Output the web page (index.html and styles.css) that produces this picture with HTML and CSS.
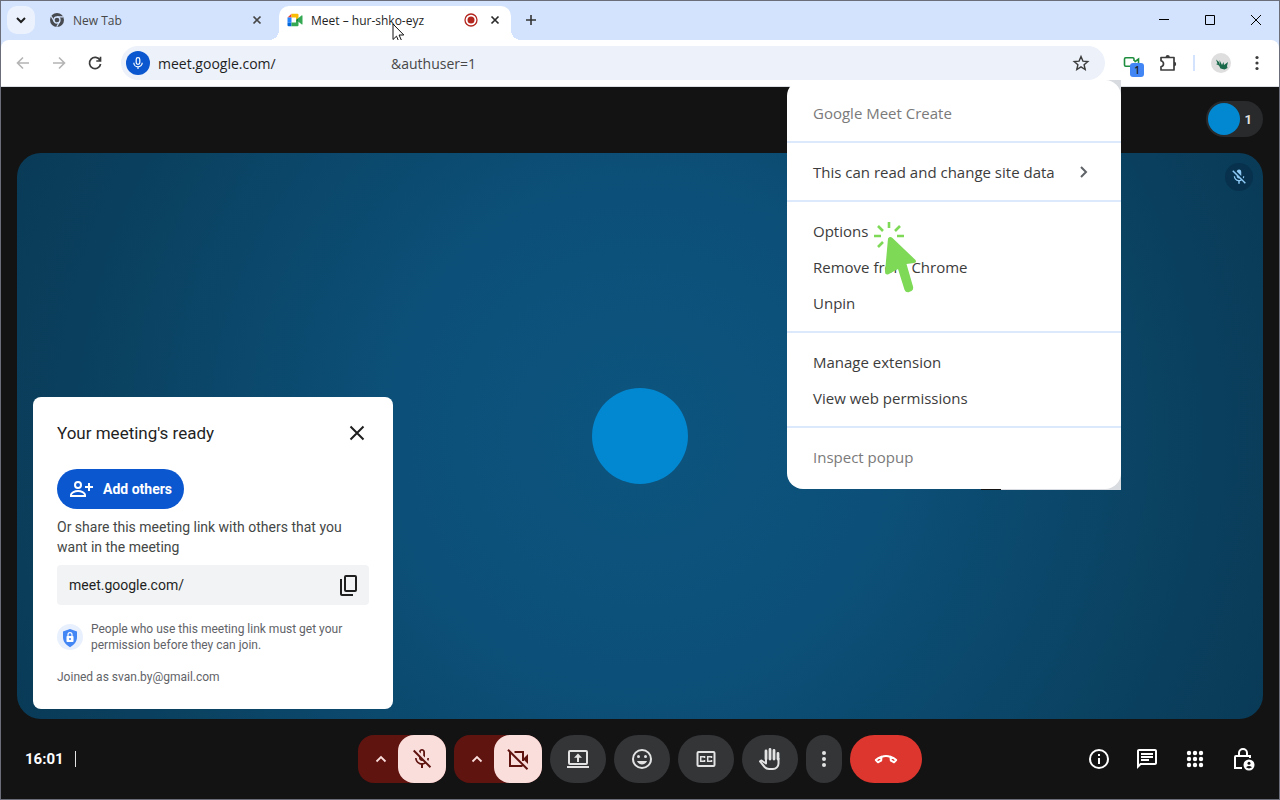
FILE: index.html
```html
<!DOCTYPE html>
<html lang="en">
<head>
  <meta charset="UTF-8">
  <title>Meet – hur-shko-eyz</title>
  <link rel="stylesheet" href="styles.css">
</head>
<body>
<div class="window">
  <header class="browser">
    <div class="tabs">
      <button class="tab-search" aria-label="Search tabs">
        <svg width="12" height="12" viewBox="0 0 12 12"><path d="M2 4 6 8 10 4" fill="none" stroke="#1f1f1f" stroke-width="2"/></svg>
      </button>
      <div class="tab">
        <svg width="16" height="16" viewBox="0 0 16 16">
          <circle cx="8" cy="8" r="7" fill="#474b50"/>
          <circle cx="8" cy="8" r="3" fill="#474b50" stroke="#d3e3fd" stroke-width="1.300"/>
          <path d="M8 4.900h6.300M5.300 9.500 2.200 4.200M10.700 9.500 7.700 14.800" stroke="#d3e3fd" stroke-width="1.200"/>
        </svg>
        <span class="tab-title">New Tab</span>
        <button class="tab-close" aria-label="Close tab">
          <svg width="10" height="10" viewBox="0 0 10 10"><path d="M1.500 1.500 8.500 8.500M8.500 1.500 1.500 8.500" stroke="#474747" stroke-width="1.700"/></svg>
        </button>
      </div>
      <div class="tab active">
        <svg width="16" height="16" viewBox="0 0 16 16">
          <path d="M0.500 5.500 4.500 1.800V5.500z" fill="#ea4335"/>
          <path d="M4.500 1.800H10.500q1 0 1 1V6L9 8V5.500H4.500z" fill="#fbbc04"/>
          <path d="M.500 5.500h4v5h-4z" fill="#2684fc"/>
          <path d="M.500 10.500h4v3.700h-3q-1 0-1-1z" fill="#0066da"/>
          <path d="M4.500 10.500H9V8l2.500-2v7.200q0 1-1 1h-6z" fill="#34a853"/>
          <path d="M11.500 6l3-2.600q1-.6 1 .5v8q0 1-1 .4l-3-2.500z" fill="#34a853"/>
          <path d="M9 8l2.500-2v4z" fill="#188038"/>
        </svg>
        <span class="tab-title">Meet – hur-shko-eyz</span>
        <svg class="record" width="14" height="14" viewBox="0 0 14 14"><circle cx="7" cy="7" r="6" fill="none" stroke="#b3261e" stroke-width="1.300"/><circle cx="7" cy="7" r="3.500" fill="#b3261e"/></svg>
        <button class="tab-close" aria-label="Close tab">
          <svg width="10" height="10" viewBox="0 0 10 10"><path d="M1.500 1.500 8.500 8.500M8.500 1.500 1.500 8.500" stroke="#2b2b2b" stroke-width="1.700"/></svg>
        </button>
        <svg class="pointer" width="13" height="20" viewBox="0 0 13 20"><path d="M1 1v15.500l3.500-3.300 2.300 5.300 2.600-1.200L7.100 12h4.700z" fill="#fff" stroke="#111" stroke-width="1"/></svg>
      </div>
      <button class="new-tab" aria-label="New tab">
        <svg width="12" height="12" viewBox="0 0 12 12"><path d="M6 1v10M1 6h10" stroke="#333" stroke-width="1.600"/></svg>
      </button>
      <div class="controls">
        <button aria-label="Minimize"><svg width="12" height="12" viewBox="0 0 12 12"><path d="M1 5.500h10" stroke="#000"/></svg></button>
        <button aria-label="Maximize"><svg width="12" height="12" viewBox="0 0 12 12"><path d="M1.500 1.500h9v9h-9z" fill="none" stroke="#000"/></svg></button>
        <button aria-label="Close"><svg width="12" height="12" viewBox="0 0 12 12"><path d="M1 1l10 10M11 1 1 11" stroke="#000"/></svg></button>
      </div>
    </div>

    <div class="toolbar">
      <div class="nav">
        <button aria-label="Back"><svg width="16" height="16" viewBox="0 0 16 16"><path d="M14 8H3M8 2.500 2.500 8 8 13.500" fill="none" stroke="#b4b4b4" stroke-width="1.600"/></svg></button>
        <button aria-label="Forward"><svg width="16" height="16" viewBox="0 0 16 16"><path d="M2 8h11M8 2.500 13.500 8 8 13.500" fill="none" stroke="#b4b4b4" stroke-width="1.600"/></svg></button>
        <button aria-label="Reload"><svg width="16" height="16" viewBox="0 0 16 16"><path d="M13 5.300A5.600 5.600 0 1 0 13.600 9M13.500 1.800V6H9.300" fill="none" stroke="#3c3c3c" stroke-width="1.700"/></svg></button>
      </div>
      <div class="omnibox">
        <button class="mic-chip" aria-label="Microphone in use">
          <svg width="16" height="16" viewBox="0 0 16 16"><rect x="6.200" y="2.600" width="3.600" height="6.800" rx="1.800" fill="none" stroke="#fff" stroke-width="1.200"/><path d="M3.800 7.700a4.200 4.200 0 0 0 8.400 0M8 12v2" fill="none" stroke="#fff" stroke-width="1.200"/></svg>
        </button>
        <input class="url" type="text" aria-label="Address" value="meet.google.com/">
        <span class="query">&amp;authuser=1</span>
        <button class="star" aria-label="Bookmark this tab">
          <svg width="18" height="18" viewBox="0 0 18 18"><path d="M9 2.500l1.900 4.600 4.900.4-3.700 3.200 1.100 4.800L9 12.900l-4.200 2.600 1.100-4.800L2.200 7.500l4.900-.4z" fill="none" stroke="#3c3c3c" stroke-width="1.400"/></svg>
        </button>
      </div>
      <button class="ext" aria-label="Google Meet Create">
        <svg width="18" height="16" viewBox="0 0 18 16"><path d="M12 6V4q0-1.200-1.200-1.200H3.700Q2.500 2.800 2.500 4v6q0 1.200 1.200 1.200H9M12.500 7l4-3v4" fill="none" stroke="#1e8e3e" stroke-width="1.600"/></svg>
        <span class="badge">1</span>
      </button>
      <button class="puzzle" aria-label="Extensions">
        <svg width="18" height="18" viewBox="0 0 18 18"><path d="M2 3.500h13v12.500H2v-3.200q2.500-.6 2.500-3T2 6.700z" fill="none" stroke="#3c3c3c" stroke-width="1.700" stroke-linejoin="round"/><path d="M6.600 3a2.100 2.100 0 0 1 4.200 0zM15 7.800a2.200 2.200 0 0 1 0 4.400z" fill="#3c3c3c"/></svg>
      </button>
      <span class="divider"></span>
      <button class="profile" aria-label="Profile">
        <svg width="20" height="20" viewBox="0 0 20 20"><circle cx="10" cy="10" r="10" fill="#dedede"/><path d="M5 6.500l3 2.500 1 3-.5-5 2.500 5 1.500-3 .5 3 4-3-1 4 .5 2-3 1.500-4-1-1.500-3-3-1.500 1.500-.5z" fill="#19694a"/></svg>
      </button>
      <button class="more" aria-label="Customize and control">
        <svg width="16" height="16" viewBox="0 0 16 16" fill="#3c3c3c"><circle cx="8" cy="2.500" r="1.600"/><circle cx="8" cy="8" r="1.600"/><circle cx="8" cy="13.500" r="1.600"/></svg>
      </button>

      <div class="menu-shot">
        <ul class="menu">
          <li><button class="muted">Google Meet Create</button></li>
          <li><button>This can read and change site data
            <svg width="10" height="14" viewBox="0 0 10 14"><path d="M2 2l5 5-5 5" fill="none" stroke="#5f6368" stroke-width="2"/></svg></button></li>
          <li>
            <button>Options</button>
            <button>Remove from Chrome</button>
            <button>Unpin</button>
            <svg class="click" width="46" height="76" viewBox="0 0 46 76">
              <path d="M17 3v6M6 7l5 5M28 7l-5 5M2 17h7M25 17h7M6 28l5-5" stroke="#7ed957" stroke-width="2.600" fill="none"/>
              <path d="M16 19.500q2-2.500 4.500-.5l23 22q1.500 2.500-1.500 2.900l-7.500 1.100 6.500 22.500q.8 3-1.500 4.500l-3 1.200q-3 .3-4-2.500L26 50l-10 5.500q-3 .5-3-2.500z" fill="#7ed957"/>
            </svg>
          </li>
          <li>
            <button>Manage extension</button>
            <button>View web permissions</button>
          </li>
          <li><button class="muted">Inspect popup</button></li>
        </ul>
      </div>
    </div>
  </header>

  <main class="meet">
    <div class="top">
      <button class="people" aria-label="People"><span class="face"></span>1</button>
    </div>

    <section class="stage">
      <div class="avatar"></div>
      <div class="muted-badge">
        <svg width="18" height="18" viewBox="0 0 24 24" fill="#8ec9f5"><path d="M15 10.600V5a3 3 0 0 0-5.960-.35zM19 11h-1.700c0 .58-.1 1.130-.27 1.640l1.270 1.270c.44-.88.7-1.870.7-2.910zM4.410 2.860 3 4.270l6 6V11c0 1.660 1.340 3 3 3 .23 0 .44-.03.65-.08l1.660 1.660c-.71.33-1.500.52-2.310.52-2.760 0-5.300-2.100-5.300-5.100H5c0 3.410 2.720 6.230 6 6.720V21h2v-3.280c.91-.13 1.770-.45 2.550-.9l4.200 4.200 1.410-1.410z"/></svg>
      </div>

      <div class="card">
        <div class="card-head">
          <h2>Your meeting's ready</h2>
          <button aria-label="Close"><svg width="16" height="16" viewBox="0 0 16 16"><path d="M1.500 1.500l13 13M14.500 1.500l-13 13" stroke="#1f1f1f" stroke-width="2"/></svg></button>
        </div>
        <button class="add">
          <svg width="24" height="24" viewBox="0 0 24 24" fill="none" stroke="#fff" stroke-width="2"><circle cx="9" cy="8" r="3"/><path d="M2 19v-1.200C2 15.500 6 14 9 14s7 1.500 7 3.800V19zM20 6v8M16 10h8"/></svg>
          Add others
        </button>
        <p class="share">Or share this meeting link with others that you want in the meeting</p>
        <div class="link">
          <input type="text" aria-label="Meeting link" value="meet.google.com/" readonly>
          <button aria-label="Copy link">
            <svg width="24" height="24" viewBox="0 0 24 24" fill="none" stroke="#1f1f1f" stroke-width="2"><rect x="8" y="3" width="11" height="15" rx="1"/><path d="M4 6v15q0 1 1 1h11"/></svg>
          </button>
        </div>
        <div class="note">
          <svg width="26" height="26" viewBox="0 0 26 26"><circle cx="13" cy="13" r="13" fill="#e8f0fe"/><path d="M13 5l7 2.600v5.400c0 4.600-3 8-7 10.200-4-2.200-7-5.600-7-10.200V7.600z" fill="#4285f4"/><rect x="9.500" y="12" width="7" height="6" rx=".8" fill="#fff"/><path d="M11 12v-1.300a2 2 0 0 1 4 0V12" fill="none" stroke="#fff" stroke-width="1.200"/><circle cx="13" cy="15" r="1" fill="#4285f4"/></svg>
          <p>People who use this meeting link must get your permission before they can join.</p>
        </div>
        <p class="joined">Joined as svan.by@gmail.com</p>
      </div>
    </section>

    <footer class="bar">
      <div class="clock">16:01</div>
      <div class="actions">
        <div class="split">
          <button class="arrow" aria-label="Audio settings"><svg width="12" height="12" viewBox="0 0 12 12"><path d="M1.500 8.500 6 4l4.500 4.500" fill="none" stroke="#f9dedc" stroke-width="1.800"/></svg></button>
          <button class="off" aria-label="Turn on microphone">
            <svg width="24" height="24" viewBox="0 0 24 24" fill="#601410"><path d="M10.800 4.900c0-.66.54-1.200 1.200-1.200s1.200.54 1.200 1.200l-.01 3.910L15 10.600V5c0-1.660-1.340-3-3-3-1.540 0-2.790 1.160-2.960 2.650l1.760 1.760zM19 11h-1.700c0 .58-.1 1.130-.27 1.640l1.270 1.270c.44-.88.7-1.870.7-2.910zM4.410 2.860 3 4.270l6 6V11c0 1.660 1.340 3 3 3 .23 0 .44-.03.65-.08l1.660 1.660c-.71.33-1.500.52-2.310.52-2.760 0-5.300-2.100-5.300-5.100H5c0 3.410 2.720 6.230 6 6.720V21h2v-3.280c.91-.13 1.770-.45 2.550-.9l4.200 4.200 1.410-1.410z"/></svg>
          </button>
        </div>
        <div class="split">
          <button class="arrow" aria-label="Video settings"><svg width="12" height="12" viewBox="0 0 12 12"><path d="M1.500 8.500 6 4l4.500 4.500" fill="none" stroke="#f9dedc" stroke-width="1.800"/></svg></button>
          <button class="off" aria-label="Turn on camera">
            <svg width="24" height="24" viewBox="0 0 24 24" fill="none" stroke="#601410" stroke-width="2"><path d="M4 4.500V19h12.500M8.500 5H17v9M2 2.800 21.500 22.300"/><path d="M18 11l4-4v10l-4-4z" fill="#601410" stroke="none"/></svg>
          </button>
        </div>
        <button class="round" aria-label="Present now">
          <svg width="24" height="24" viewBox="0 0 24 24" fill="none" stroke="#e3e3e3" stroke-width="2"><rect x="3" y="4" width="18" height="13" rx="1"/><path d="M1 20h22M12 15V9"/><path d="M8 10.700 12 6.500l4 4.200z" fill="#e3e3e3" stroke="none"/></svg>
        </button>
        <button class="round" aria-label="Send a reaction">
          <svg width="24" height="24" viewBox="0 0 24 24" fill="#e3e3e3"><circle cx="12" cy="12" r="9" fill="none" stroke="#e3e3e3" stroke-width="2"/><circle cx="8.500" cy="9.500" r="1.500"/><circle cx="15.500" cy="9.500" r="1.500"/><path d="M7 14c.8 2.040 2.700 3.500 5 3.500s4.200-1.460 5-3.500z"/></svg>
        </button>
        <button class="round" aria-label="Turn on captions">
          <svg width="24" height="24" viewBox="0 0 24 24" fill="none" stroke="#e3e3e3"><rect x="3.500" y="5" width="17" height="14" rx="1" stroke-width="2"/><path d="M10.500 11v-1.200H6.700v4.400h3.800V13M17.500 11v-1.200h-3.800v4.400h3.800V13" stroke-width="1.500"/></svg>
        </button>
        <button class="round" aria-label="Raise hand">
          <svg width="24" height="24" viewBox="0 0 24 24" fill="none" stroke="#e3e3e3" stroke-width="2"><path d="M8 12V4M12 12V2.500M16 12V3.500M20 12V6.500" stroke-width="2.800" stroke-linecap="round"/><path d="M8 11v5.500l-4.500-3-1.500.8 4.600 5.700a6 6 0 0 0 4.600 2H15a5.500 5.500 0 0 0 5.500-5.500V11" stroke-linejoin="round"/></svg>
        </button>
        <button class="round narrow" aria-label="More options">
          <svg width="24" height="24" viewBox="0 0 24 24" fill="#e3e3e3"><circle cx="12" cy="6" r="2"/><circle cx="12" cy="12" r="2"/><circle cx="12" cy="18" r="2"/></svg>
        </button>
        <button class="round leave" aria-label="Leave call">
          <svg width="24" height="24" viewBox="0 0 24 24" fill="none" stroke="#fff" stroke-width="2" stroke-linejoin="round"><path d="M7.500 10Q12 8 16.500 10M7.500 9.800C5 10.500 3 11.800 1.800 13L4 15.300Q5.500 14.300 7.200 13.500zM16.500 9.800c2.500.7 4.500 2 5.700 3.200L20 15.300q-1.500-1-3.200-1.800z"/></svg>
        </button>
      </div>
      <div class="tools">
        <button aria-label="Meeting details">
          <svg width="24" height="24" viewBox="0 0 24 24"><circle cx="12" cy="12" r="9" fill="none" stroke="#fff" stroke-width="2"/><path d="M11 7h2v2h-2zM11 11h2v6h-2z" fill="#fff"/></svg>
        </button>
        <button aria-label="Chat">
          <svg width="24" height="24" viewBox="0 0 24 24" fill="#fff"><path d="M4 4h16v12H5.170L4 17.170V4m0-2c-1.100 0-1.990.9-1.990 2L2 22l4-4h14c1.100 0 2-.9 2-2V4c0-1.100-.9-2-2-2zm2 10h8v2H6zm0-3h12v2H6zm0-3h12v2H6z"/></svg>
        </button>
        <button aria-label="Activities">
          <svg width="24" height="24" viewBox="0 0 24 24" fill="#fff"><circle cx="6" cy="6" r="2.200"/><circle cx="12" cy="6" r="2.200"/><circle cx="18" cy="6" r="2.200"/><circle cx="6" cy="12" r="2.200"/><circle cx="12" cy="12" r="2.200"/><circle cx="18" cy="12" r="2.200"/><circle cx="6" cy="18" r="2.200"/><circle cx="12" cy="18" r="2.200"/><circle cx="18" cy="18" r="2.200"/></svg>
        </button>
        <button aria-label="Host controls">
          <svg width="24" height="24" viewBox="0 0 24 24" fill="none" stroke="#fff" stroke-width="2"><path d="M19 11V9H5q-1 0-1 1v11h7M8 9V6a4 4 0 0 1 8 0v3"/><circle cx="18" cy="18" r="5.500" fill="#fff" stroke="none"/><circle cx="18" cy="16.300" r="1.500" fill="#131314" stroke="none"/><path d="M15 20.300q3-2.600 6 0-3 2.200-6 0z" fill="#131314" stroke="none"/></svg>
        </button>
      </div>
    </footer>
  </main>
</div>
</body>
</html>
```

FILE: styles.css
```css
* {
  box-sizing: border-box;
  margin: 0;
  padding: 0;
}

body {
  font-family: "Open Sans", "Noto Sans", sans-serif;
  color: #1f1f1f;
}

button,
input {
  font: inherit;
  color: inherit;
  border: 0;
  background: none;
}

button {
  display: flex;
  align-items: center;
  justify-content: center;
  flex-shrink: 0;
  cursor: pointer;
}

svg {
  display: block;
  flex-shrink: 0;
}

.window {
  display: flex;
  flex-direction: column;
  min-height: 100vh;
  border: 1px solid #6b6e78;
  background: #131314;
}

/* browser chrome */
.browser {
  background: #d3e3fd;
}

.tabs {
  display: flex;
  height: 39px;
  padding: 5px 0 0 6px;
  font-size: 12px;
}

.tab-search {
  width: 28px;
  height: 28px;
  border-radius: 10px;
  background: #ebf2fe;
}

.tab {
  position: relative;
  display: flex;
  align-items: center;
  gap: 8px;
  width: 244px;
  height: 28px;
  padding: 0 16px 0 14px;
  color: #474747;
}

.tab-title {
  flex: 1;
  white-space: nowrap;
}

.tab.active {
  width: 232px;
  height: 34px;
  padding: 0 10px 6px 8px;
  border-radius: 10px 10px 0 0;
  background: #fff;
  color: #1f1f1f;
}

.tab.active::before,
.tab.active::after {
  content: "";
  position: absolute;
  bottom: 0;
  width: 10px;
  height: 10px;
}

.tab.active::before {
  left: -10px;
  background: radial-gradient(circle at 0 0, transparent 10px, #fff 10px);
}

.tab.active::after {
  right: -10px;
  background: radial-gradient(circle at 100% 0, transparent 10px, #fff 10px);
}

.tab-close {
  width: 12px;
  height: 16px;
}

.record {
  margin-right: 3px;
}

.pointer {
  position: absolute;
  left: 113px;
  top: 17px;
}

.new-tab {
  width: 28px;
  height: 28px;
  margin-left: 6px;
}

.controls {
  display: flex;
  margin-left: auto;
}

.controls button {
  width: 46px;
  height: 28px;
}

.toolbar {
  position: relative;
  display: flex;
  align-items: center;
  height: 47px;
  padding: 0 14px 0 8px;
  border-bottom: 1px solid #dcdfe3;
  border-radius: 8px 8px 0 0;
  background: #fff;
}

.nav {
  display: flex;
  gap: 8px;
  margin-right: 12px;
}

.nav button {
  width: 28px;
  height: 28px;
}

.omnibox {
  display: flex;
  flex: 1;
  align-items: center;
  height: 34px;
  padding: 0 12px 0 5px;
  border-radius: 17px;
  background: #ecf1fa;
  font-size: 14px;
}

.mic-chip {
  width: 24px;
  height: 24px;
  border-radius: 50%;
  background: #0b57d0;
}

.url {
  width: 233px;
  margin-left: 8px;
  outline: none;
}

.query {
  flex: 1;
  color: #474747;
}

.star {
  width: 24px;
  height: 24px;
}

.ext {
  position: relative;
  width: 20px;
  height: 28px;
  margin-left: 16px;
}

.badge {
  position: absolute;
  left: 9px;
  top: 14px;
  width: 14px;
  height: 14px;
  border-radius: 3px;
  background: #4285f4;
  font-size: 10px;
  font-weight: 600;
  line-height: 14px;
}

.puzzle {
  width: 28px;
  margin-left: 13px;
}

.divider {
  width: 2px;
  height: 16px;
  margin: 0 16px 0 11px;
  background: #d3e3fd;
}

.more {
  margin-left: 18px;
}

/* extension menu */
.menu-shot {
  position: absolute;
  z-index: 2;
  top: 40px;
  right: 158px;
  width: 334px;
  padding-bottom: 1px;
  background: linear-gradient(to right, transparent 58%, #131314 58%, #131314 64%, #d8dbdf 64%);
}

.menu {
  border-radius: 16px;
  background: #fff;
  list-style: none;
  font-size: 15px;
}

.menu li {
  position: relative;
  padding: 11px 0 10px;
  border-bottom: 2px solid #dce8fb;
}

.menu li:first-child {
  padding-top: 15px;
}

.menu li:last-child {
  padding-bottom: 14px;
  border-bottom: 0;
}

.menu button {
  justify-content: space-between;
  width: 100%;
  height: 36px;
  padding: 0 32px 0 26px;
  color: #3c3c3c;
}

.menu button.muted {
  color: #7a7a7a;
}

.click {
  position: absolute;
  left: 85px;
  top: 17px;
}

/* meeting */
.meet {
  display: flex;
  flex: 1;
  flex-direction: column;
  padding: 0 16px;
  color: #e3e3e3;
  font-family: "Roboto", sans-serif;
}

.top {
  display: flex;
  justify-content: flex-end;
  padding: 14px 0 16px;
}

.people {
  gap: 5px;
  height: 36px;
  padding: 0 11px 0 2px;
  border-radius: 18px;
  background: #282a2c;
  font-size: 13px;
  font-weight: 700;
}

.face {
  width: 32px;
  height: 32px;
  border-radius: 50%;
  background: #0288d1;
}

.stage {
  position: relative;
  display: grid;
  flex: 1;
  place-items: center;
  border-radius: 24px;
  background: radial-gradient(circle at center, #0c547e 0, #0c5079 35%, #0a3f5d 85%, #093b57 100%);
}

.avatar {
  width: 96px;
  height: 96px;
  border-radius: 50%;
  background: #0288d1;
}

.muted-badge {
  position: absolute;
  top: 10px;
  right: 10px;
  display: grid;
  place-items: center;
  width: 28px;
  height: 28px;
  border-radius: 50%;
  background: #07314c;
}

.card {
  position: absolute;
  left: 16px;
  bottom: 10px;
  width: 360px;
  padding: 24px;
  border-radius: 8px;
  background: #fff;
  color: #444746;
  font-size: 14px;
  line-height: 20px;
}

.card-head {
  display: flex;
  align-items: center;
  justify-content: space-between;
  height: 24px;
  margin-bottom: 24px;
}

.card-head h2 {
  color: #1f1f1f;
  font-size: 17px;
  font-weight: 400;
}

.card-head button {
  width: 24px;
  height: 24px;
}

.add {
  gap: 10px;
  height: 40px;
  margin-bottom: 8px;
  padding: 0 12px;
  border-radius: 20px;
  background: #0b57d0;
  color: #fff;
  font-weight: 700;
}

.link {
  display: flex;
  align-items: center;
  height: 40px;
  margin: 8px 0 16px;
  padding: 0 8px 0 12px;
  border-radius: 4px;
  background: #f1f3f4;
  color: #1f1f1f;
}

.link input {
  flex: 1;
  min-width: 0;
}

.note {
  display: flex;
  align-items: center;
  gap: 8px;
  margin-bottom: 16px;
  color: #5f6368;
  font-size: 12px;
  line-height: 16px;
}

.joined {
  color: #5f6368;
  font-size: 12px;
  line-height: 16px;
}

.bar {
  display: grid;
  grid-template-columns: 1fr auto 1fr;
  align-items: center;
  height: 80px;
}

.clock {
  justify-self: start;
  margin-left: 8px;
  padding-right: 11px;
  border-right: 1px solid #e3e3e3;
  color: #fff;
  font-size: 15px;
  font-weight: 700;
  line-height: 16px;
}

.actions {
  display: flex;
  gap: 8px;
}

.split {
  display: flex;
  border-radius: 16px;
  background: #601410;
}

.arrow {
  width: 40px;
  padding-left: 6px;
}

.off {
  width: 48px;
  height: 48px;
  border-radius: 16px;
  background: #f9dedc;
}

.round {
  width: 56px;
  height: 48px;
  border-radius: 24px;
  background: #333537;
}

.narrow {
  width: 36px;
  border-radius: 18px;
}

.leave {
  width: 72px;
  background: #dc362e;
}

.tools {
  display: flex;
  justify-self: end;
  gap: 24px;
  padding-right: 8px;
}
```
